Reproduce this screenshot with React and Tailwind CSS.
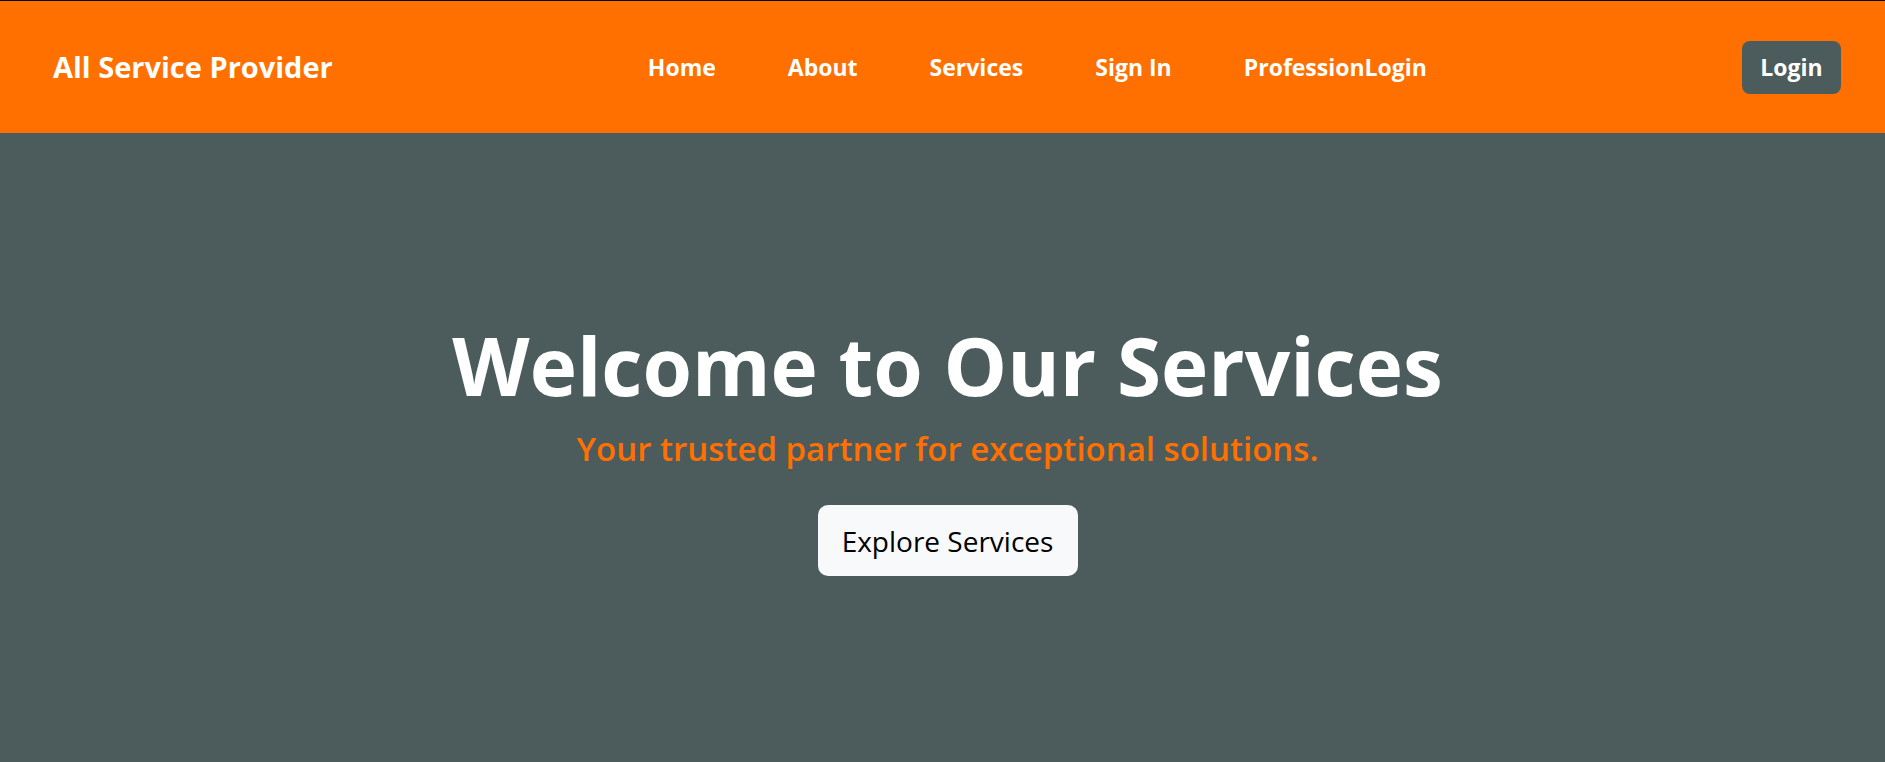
import React from 'react';

const navLinks = ['Home', 'About', 'Services', 'Sign In', 'ProfessionLogin'];

const App = () => {
  return (
    <div className="min-h-screen flex flex-col bg-[#4c5c5c]" style={{ fontFamily: '"Open Sans", "Noto Sans", sans-serif' }}>
      {/* Top navigation */}
      <header className="h-[133px] border-t border-black bg-[#ff7000] pl-[53px] pr-[44px] flex items-center justify-between">
        <div className="text-[29px] font-bold text-white">All Service Provider</div>
        <nav className="flex items-center">
          {navLinks.map((link) => (
            <a key={link} href="#" className="px-[36px] text-[23px] font-bold text-white">
              {link}
            </a>
          ))}
        </nav>
        <button className="w-[99px] h-[53px] rounded-lg bg-[#4c5c5c] text-[23px] font-bold text-white">
          Login
        </button>
      </header>

      {/* Hero */}
      <main className="flex-1 h-[629px] pt-[6px] pl-[10px] flex flex-col items-center justify-center text-center">
        <h1 className="text-[80px] font-bold leading-none text-white">Welcome to Our Services</h1>
        <p className="mt-[21px] text-[33px] font-semibold leading-[1.4] text-[#ff7000]">Your trusted partner for exceptional solutions.</p>
        <button className="mt-[33px] w-[260px] h-[71px] rounded-[10px] bg-[#f8f9fa] text-[28px] text-black">
          Explore Services
        </button>
      </main>
    </div>
  );
};

export default App;
